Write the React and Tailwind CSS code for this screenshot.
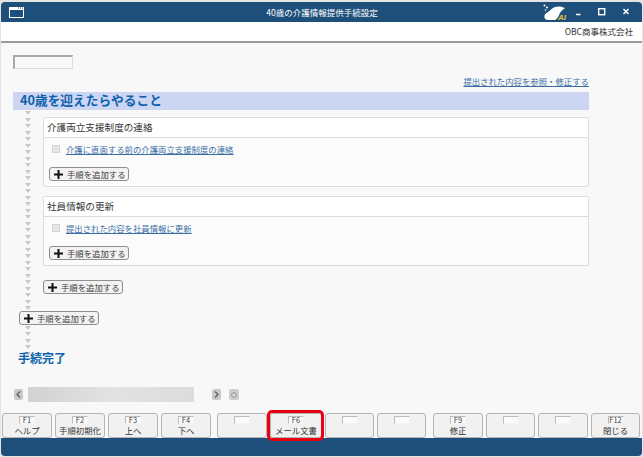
const F = { fontFamily: '"Noto Sans CJK JP", "Liberation Sans", sans-serif' };

function Plus() {
  return (
    <svg width="9" height="9" viewBox="0 0 9 9" className="shrink-0">
      <path d="M3.5 0h2v3.5H9v2H5.5V9h-2V5.5H0v-2h3.5z" fill="#111" />
    </svg>
  );
}

function AddButton({ className = "" }) {
  return (
    <button className={`flex h-[14px] w-[80px] items-center gap-[4px] rounded-[3px] border border-[#8f8f8f] bg-[#f2f2f2] pl-[4px] text-[8.4px] leading-none text-[#3c3c3c] ${className}`}>
      <Plus />
      <span>手順を追加する</span>
    </button>
  );
}

function Step({ title, link, className = "" }) {
  return (
    <section className={`h-[70px] w-[546px] rounded-[2px] border border-[#dcdcdc] bg-[#fbfbfb] ${className}`}>
      <div className="flex h-[20px] items-center border-b border-[#dcdcdc] bg-white pl-[3px] text-[9.6px] leading-none text-[#333]">
        {title}
      </div>
      <div className="flex items-center gap-[6px] pl-[8px] pt-[5px]">
        <span className="h-[8px] w-[8px] border border-[#d5d5d5] bg-[#e6e6e6]" />
        <a className="text-[8.4px] leading-[12px] text-[#3a6ea5] underline">{link}</a>
      </div>
      <AddButton className="ml-[5px] mt-[12px]" />
    </section>
  );
}

function FKey({ k, label, className = "" }) {
  return (
    <button className={`flex h-[25px] flex-col items-center rounded-[3px] border border-[#b4b4b4] bg-[#f1f1f1] ${className}`}>
      <span className="mt-[2px] flex h-[8px] w-[16px] items-center justify-center border border-b-[#f4f4f4] border-l-[#bcbcbc] border-r-[#f4f4f4] border-t-[#bcbcbc] bg-[#fafafa] text-[7.5px] leading-none text-[#444]">
        {k}
      </span>
      <span className="text-[8.4px] leading-[12px] text-[#333]">{label}</span>
    </button>
  );
}

function Chevron({ dir, className = "" }) {
  return (
    <button className={`flex h-[11px] w-[9px] items-center justify-center rounded-[2px] bg-[#c9c9c9] ${className}`}>
      <svg width="5" height="7" viewBox="0 0 5 7" fill="none" stroke="#555" strokeWidth="1.1">
        <path d={dir === "l" ? "M4 .5 1 3.5l3 3" : "M1 .5l3 3-3 3"} />
      </svg>
    </button>
  );
}

export default function App() {
  return (
    <div style={F} className="h-[457px] w-[643px] overflow-hidden bg-[#e4e4e4]">
      <div className="ml-[1px] mt-[2px] flex h-[454px] w-[641px] flex-col overflow-hidden rounded-[4px] bg-[#f8f8f8]">
        <header className="relative flex h-[20px] shrink-0 items-center justify-center bg-[#1d4f7a] text-[8.5px] leading-none text-white">
          <svg width="15" height="11" viewBox="0 0 15 11" className="absolute left-[8px] top-[5px]">
            <rect x=".5" y=".5" width="14" height="10" fill="#1d4f7a" stroke="#fff" />
            <rect x="0" y="0" width="15" height="3" fill="#fff" />
            <path d="M9 1h1M11 1h1M13 1h1" stroke="#1d4f7a" strokeWidth="1" />
          </svg>
          <span className="pl-[1px]">40歳の介護情報提供手続設定</span>
          <div className="absolute right-0 top-0 flex h-full items-center">
            <div className="relative mr-[9px] h-[17px] w-[23px]">
              <svg width="23" height="17" viewBox="0 0 23 17" className="absolute left-0 top-0">
                <path d="M1.500 13.500C1 10.500 3 9 5 8 7.500 6.500 9 4 12 3c3.500-1 7-.5 10 1-1.500 1.500-4 2.500-5 5-1 2-1.500 4-3 5.500-1 1-2 1.500-3.500 1.500H5c-2 0-3.200-1-3.500-2.500z" fill="#fff" />
                <circle cx="1.500" cy="1.500" r="1" fill="#fff" />
                <circle cx="4" cy="3.500" r="1" fill="#fff" />
                <circle cx="2.500" cy="6" r=".8" fill="#fff" />
              </svg>
              <span className="absolute bottom-[-1px] right-0 text-[8px] font-bold italic leading-none text-[#e8c23a]" style={{ fontFamily: '"Liberation Sans", sans-serif' }}>AI</span>
            </div>
            <svg width="57" height="10" viewBox="0 0 57 10" className="mr-[10px]" fill="none" stroke="#fff">
              <path d="M1 7.500h4.500" strokeWidth="1.4" />
              <rect x="23.700" y="1.700" width="6" height="6" strokeWidth="1.400" />
              <path d="M48.500 2l5 5m0-5-5 5" strokeWidth="1.500" />
            </svg>
          </div>
        </header>
        <div className="flex h-[21px] shrink-0 items-center justify-end border-b-2 border-[#9a9a9a] bg-white pr-[9px] text-[8.5px] leading-none text-[#333]">
          OBC商事株式会社
        </div>
        <main className="relative flex min-h-0 flex-1 flex-col pl-[12px]">
          <div className="pointer-events-none absolute left-[24px] top-[68px] flex flex-col items-center gap-[2.5px]">
            {Array.from({ length: 38 }).map((_, i) => (
              <span key={i} className="h-0 w-0 border-x-[3px] border-t-[4px] border-x-transparent border-t-[#c8c8c8]" />
            ))}
          </div>
          <div className="mt-[12px] h-[14px] w-[60px] border-b border-l-2 border-r border-t-2 border-b-[#dcdcdc] border-l-[#a8a8a8] border-r-[#dcdcdc] border-t-[#a8a8a8] bg-[#f8f8f8]" />
          <a className="mt-[6px] w-[576px] text-right text-[8.4px] leading-[12px] text-[#3a6ea5] underline">提出された内容を参照・修正する</a>
          <h2 className="relative mt-[5px] flex h-[18px] w-[576px] items-center bg-[#ccd6f3] pb-[2px] pl-[7px] text-[12.7px] font-bold leading-none text-[#0f62ad]">
            40歳を迎えたらやること
          </h2>
          <div className="relative ml-[30px] mt-[7px] flex flex-col gap-[9px]">
            <Step title="介護両立支援制度の連絡" link="介護に直面する前の介護両立支援制度の連絡" />
            <Step title="社員情報の更新" link="提出された内容を社員情報に更新" />
          </div>
          <AddButton className="relative ml-[30px] mt-[14px]" />
          <AddButton className="relative ml-[6px] mt-[17px]" />
          <h2 className="relative ml-[5px] mt-[26px] text-[12px] font-bold leading-[14px] text-[#0f62ad]">手続完了</h2>
          <div className="relative ml-[1px] mt-[22px] flex items-center">
            <Chevron dir="l" />
            <div className="ml-[5px] h-[15px] w-[166px] bg-gradient-to-r from-[#d2d2d2] via-[#e2e2e2] to-[#dcdcdc]" />
            <Chevron dir="r" className="ml-[18px]" />
            <span className="ml-[8px] flex h-[11px] w-[10px] items-center justify-center rounded-[2px] bg-[#cfcfcf]">
              <span className="h-[6px] w-[6px] rounded-full border border-[#9c9c9c]" />
            </span>
          </div>
        </main>
        <footer className="relative z-10 flex h-[27px] shrink-0 items-start pl-[1px] pt-[2px]">
          <div className="flex gap-[3px]">
            <FKey k="F1" label="ヘルプ" className="w-[50px]" />
            <FKey k="F2" label="手順初期化" className="w-[50px]" />
            <FKey k="F3" label="上へ" className="w-[50px]" />
            <FKey k="F4" label="下へ" className="w-[50px]" />
          </div>
          <div className="ml-[6px] flex gap-[3px]">
            <FKey k="" label="" className="w-[50px]" />
            <FKey k="F6" label="メール文書" className="w-[52px]" />
            <FKey k="" label="" className="w-[49px]" />
            <FKey k="" label="" className="w-[49px]" />
          </div>
          <div className="ml-[7px] flex gap-[3px]">
            <FKey k="F9" label="修正" className="w-[50px]" />
            <FKey k="" label="" className="w-[49px]" />
            <FKey k="" label="" className="w-[50px]" />
            <FKey k="F12" label="閉じる" className="w-[49px]" />
          </div>
          <div className="pointer-events-none absolute left-[266px] top-[-1px] h-[31px] w-[57px] rounded-[5px] border-[3px] border-[#e60012]" />
        </footer>
        <div className="h-[18px] shrink-0 bg-[#1d4f7a]" />
      </div>
    </div>
  );
}
